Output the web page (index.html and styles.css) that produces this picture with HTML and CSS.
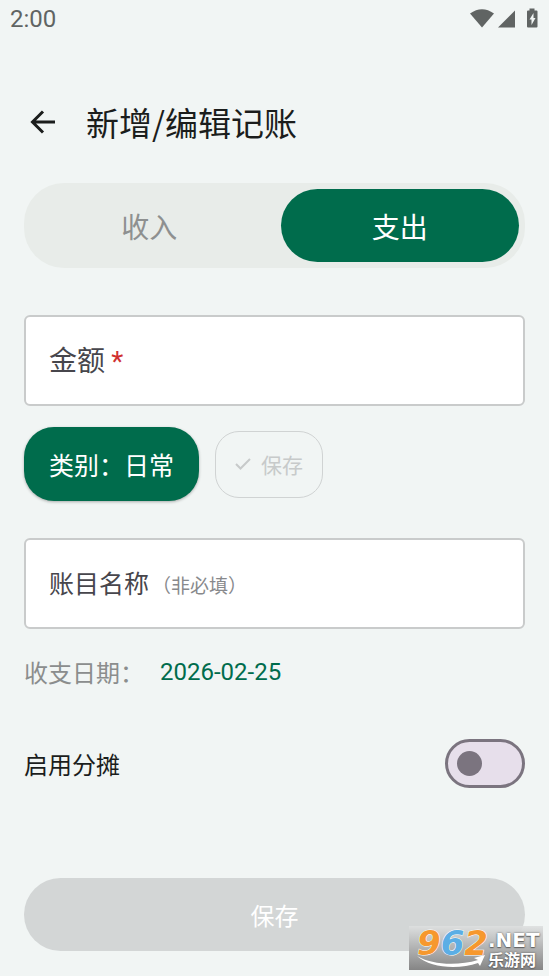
FILE: index.html
```html
<!DOCTYPE html>
<html lang="zh-CN">
<head>
<meta charset="utf-8">
<meta name="viewport" content="width=device-width, initial-scale=1">
<title>新增/编辑记账</title>
<link rel="stylesheet" href="styles.css">
</head>
<body>
<div class="status">
  <span class="clock">2:00</span>
  <svg class="status-icons" viewBox="0 0 70 22" aria-hidden="true">
    <path d="M0 5.500Q12-3 24 5.500L12 19.500Z"/>
    <path d="M45 2.500V19.500H28Z"/>
    <path fill-rule="evenodd" d="M59.500 2.500V0.5H64.500V2.500H66.500Q67.500 2.500 67.500 3.500V18.500Q67.500 19.500 66.500 19.500H58Q57 19.500 57 18.500V3.500Q57 2.500 58 2.500ZM63.500 5L59.500 11.500H61.500V17L65.500 10H63.500Z"/>
  </svg>
</div>
<header class="header">
  <button class="back" type="button" aria-label="返回">
    <svg viewBox="0 0 26 24" aria-hidden="true"><path d="M25 12H2.500M13 1.500L2.500 12L13 22.500"/></svg>
  </button>
  <h1>新增/编辑记账</h1>
</header>
<form class="form">
  <div class="segment">
    <button class="seg" type="button">收入</button>
    <button class="seg seg-active" type="button">支出</button>
  </div>
  <div class="field field-amount">
    <label class="label-large" for="amount">金额 <span class="required">*</span></label>
    <input id="amount" type="text" inputmode="decimal">
  </div>
  <div class="chips">
    <button class="category" type="button">类别：日常</button>
    <button class="mini-save" type="button" disabled>
      <svg viewBox="0 0 16 12" aria-hidden="true"><path d="M1 6L5.500 10.500L15 1"/></svg>
      保存
    </button>
  </div>
  <div class="field field-name">
    <label for="name">账目名称<span class="optional">（非必填）</span></label>
    <input id="name" type="text">
  </div>
  <div class="date-row">
    <span>收支日期：</span>
    <button class="date" type="button">2026-02-25</button>
  </div>
  <div class="switch-row">
    <label for="split">启用分摊</label>
    <input class="switch" id="split" type="checkbox" role="switch">
  </div>
  <button class="submit" type="submit" disabled>保存</button>
</form>
<div class="mark">
  <span class="mark-num"><span>9</span><span class="blue">6</span><span>2</span></span>
  <span class="mark-side"><span class="mark-net">.NET</span><span class="mark-cn">乐游网</span></span>
  <svg class="swoosh" viewBox="0 0 70 14" aria-hidden="true"><path d="M1 1C16 10 42 11 62 5L58 3L69 0L64 11L62 8C42 15 14 13 1 1Z"/></svg>
</div>
</body>
</html>
```
FILE: styles.css
```css
* { box-sizing: border-box; }

body {
  margin: 0;
  min-height: 100vh;
  position: relative;
  background: #f1f5f4;
  color: #1b1d1c;
  font-family: "Noto Sans CJK SC", sans-serif;
  font-size: 25px;
  line-height: 36px;
}

button, input { font: inherit; color: inherit; margin: 0; }
button { border: 0; padding: 0; background: none; }

.status {
  display: flex;
  justify-content: space-between;
  align-items: center;
  height: 38px;
  padding: 0 9px 0 10px;
  color: #606463;
}
.clock { font-family: Roboto, sans-serif; font-size: 24px; }
.status-icons { width: 70px; height: 22px; fill: #606463; }

.header {
  display: flex;
  align-items: center;
  gap: 30px;
  height: 145px;
  padding: 46px 30px 24px;
}
.back { display: flex; }
.back svg {
  width: 26px;
  height: 24px;
  fill: none;
  stroke: #1b1d1c;
  stroke-width: 3;
}
h1 { margin: 0; font-size: 33px; line-height: 48px; font-weight: 400; }

.form { padding: 0 24px 24px; display: flex; flex-direction: column; }

.segment {
  display: grid;
  grid-template-columns: 1fr 1fr;
  gap: 12px;
  padding: 6px;
  border-radius: 40px;
  background: #e8ece9;
}
.seg { height: 73px; border-radius: 37px; font-size: 28px; color: #8e9090; }
.seg-active { background: #006c4c; color: #fff; }

.field {
  display: grid;
  align-items: center;
  height: 91px;
  border: 2px solid #c9cbcb;
  border-radius: 6px;
  background: #fff;
}
.field > * { grid-area: 1 / 1; }
.field label { padding: 0 23px; color: #47464c; }
.field input {
  width: 100%;
  height: 100%;
  padding: 0 23px;
  border: 0;
  background: transparent;
}
.field-amount { margin-top: 47px; }
.field-name { margin-top: 37px; }
.field .label-large { font-size: 28px; }
.required { font-family: Roboto, sans-serif; color: #d03030; }
.optional { margin-left: 3px; font-size: 19px; color: #88898c; }

.chips { display: flex; align-items: center; gap: 16px; margin-top: 21px; }
.category {
  height: 74px;
  padding: 0 25px;
  border-radius: 30px;
  background: #006c4c;
  color: #fff;
  box-shadow: 0 1px 3px rgba(0, 0, 0, 0.3);
}
.mini-save {
  display: flex;
  align-items: center;
  gap: 10px;
  height: 67px;
  padding: 0 19px;
  border: 1px solid #d0d3d3;
  border-radius: 24px;
  font-size: 21px;
  color: #c7caca;
}
.mini-save svg { width: 16px; height: 12px; fill: none; stroke: #c7caca; stroke-width: 2; }

.date-row {
  display: flex;
  align-items: center;
  gap: 16px;
  margin-top: 25px;
  font-size: 24px;
  color: #8b8d8d;
}
.date { font-family: Roboto, sans-serif; color: #006c4c; }

.switch-row {
  display: flex;
  align-items: center;
  justify-content: space-between;
  margin-top: 49px;
  font-size: 24px;
}
.switch {
  appearance: none;
  display: flex;
  align-items: center;
  width: 80px;
  height: 49px;
  padding: 0 9px;
  border: 3px solid #7b747f;
  border-radius: 25px;
  background: #e7dfeb;
}
.switch::before {
  content: "";
  width: 25px;
  height: 25px;
  border-radius: 50%;
  background: #7b747f;
}
.switch:checked { justify-content: flex-end; }

.submit {
  height: 73px;
  margin-top: 90px;
  border-radius: 37px;
  background: #d3d6d6;
  font-size: 24px;
  color: #fff;
}

.mark {
  position: absolute;
  right: 6px;
  bottom: 6px;
  display: flex;
  width: 134px;
  height: 44px;
  padding-left: 8px;
  background: linear-gradient(rgba(222, 224, 224, 0.9), #858585);
  font-weight: 700;
  color: #fff;
}
.mark-num {
  font: italic 700 34px/34px "DejaVu Sans", sans-serif;
  color: #f6982e;
  -webkit-text-stroke: 1px #fff;
  paint-order: stroke fill;
}
.blue { color: #5baee5; }
.mark-side {
  display: flex;
  flex-direction: column;
  justify-content: space-between;
  padding: 6px 0 3px;
  text-shadow: 0 0 2px #555, 0 1px 1px #666;
}
.mark-net { font: 700 20px/16px "DejaVu Sans", sans-serif; }
.mark-cn { font-size: 16px; line-height: 16px; }
.swoosh { position: absolute; left: 7px; bottom: 1px; width: 70px; height: 14px; fill: #fff; }
```
